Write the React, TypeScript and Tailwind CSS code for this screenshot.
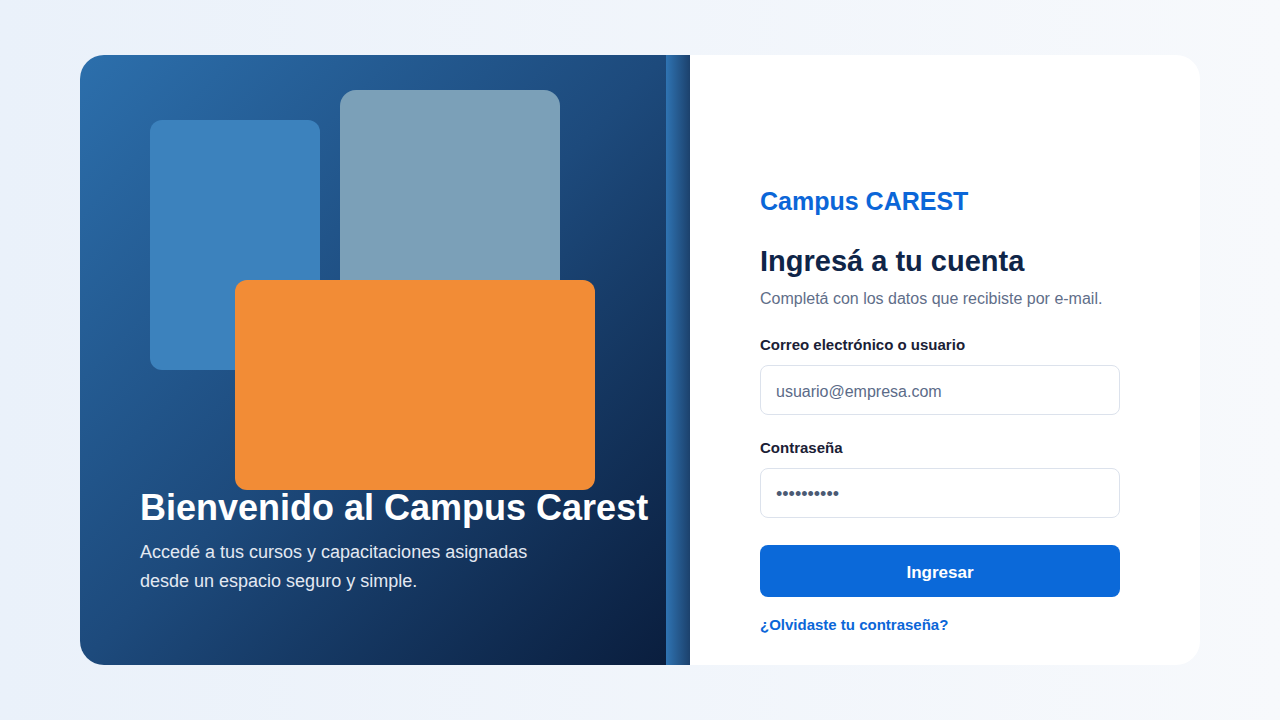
const font = { fontFamily: '"Liberation Sans", Arial, sans-serif' };

const App = () => {
  return (
    <div
      className="w-[1280px] h-[720px] flex items-center justify-center bg-gradient-to-r from-[#eaf1fa] to-[#f7f9fc]"
      style={font}
    >
      <div className="w-[1120px] h-[610px] flex rounded-[24px] overflow-hidden bg-white">
        {/* left: welcome panel */}
        <div className="w-[610px] h-full flex">
          <div className="relative flex-1 flex flex-col justify-end pl-[60px] pb-[69px] bg-gradient-to-br from-[#2c6fac] via-[#1d4a7c] to-[#0a1e3e]">
            <div className="absolute left-[70px] top-[65px] w-[170px] h-[250px] rounded-[12px] bg-[#3c82bd]" />
            <div className="absolute left-[260px] top-[35px] w-[220px] h-[250px] rounded-[16px] bg-[#7ba0b8]" />
            <div className="absolute left-[155px] top-[225px] w-[360px] h-[210px] rounded-[12px] bg-[#f28c36]" />
            <div className="relative">
              <h1 className="text-[36px] leading-[40px] font-bold text-white whitespace-nowrap">
                Bienvenido al Campus Carest
              </h1>
              <p className="mt-[10px] text-[18px] leading-[29px] text-[#e3e9f2]">
                Accedé a tus cursos y capacitaciones asignadas
                <br />
                desde un espacio seguro y simple.
              </p>
            </div>
          </div>
          <div className="w-[24px] h-full bg-gradient-to-r from-[#2f74b3] to-[#1c416c]" />
        </div>

        {/* right: login form */}
        <div className="flex-1 flex flex-col pl-[70px] pr-[80px] pt-[130px]">
          <div className="text-[25px] leading-[32px] font-bold text-[#0b66d8]">Campus CAREST</div>
          <h2 className="mt-[26px] text-[29px] leading-[36px] font-bold text-[#0f2548]">
            Ingresá a tu cuenta
          </h2>
          <p className="mt-[9px] text-[16px] leading-[22px] text-[#5f6e89]">
            Completá con los datos que recibiste por e-mail.
          </p>

          <label className="mt-[25px] text-[15px] leading-[20px] font-bold text-[#1a2035]">
            Correo electrónico o usuario
          </label>
          <div className="mt-[10px] h-[50px] flex items-center pt-[3px] px-[15px] rounded-[8px] border-[1.5px] border-[#dce2ec] text-[16px] text-[#5b6b88]">
            usuario@empresa.com
          </div>

          <label className="mt-[23px] text-[15px] leading-[20px] font-bold text-[#1a2035]">
            Contraseña
          </label>
          <div className="mt-[10px] h-[50px] flex items-center pt-[2px] px-[15px] rounded-[8px] border-[1.5px] border-[#dce2ec] text-[18px] text-[#4b5a74]">
            ••••••••••
          </div>

          <button className="mt-[27px] h-[52px] pt-[3px] rounded-[8px] bg-[#0b69d9] text-white text-[17px] font-bold">
            Ingresar
          </button>

          <a className="mt-[18px] text-[15px] leading-[20px] font-bold text-[#0b66d8]">
            ¿Olvidaste tu contraseña?
          </a>
        </div>
      </div>
    </div>
  );
};

export default App;
